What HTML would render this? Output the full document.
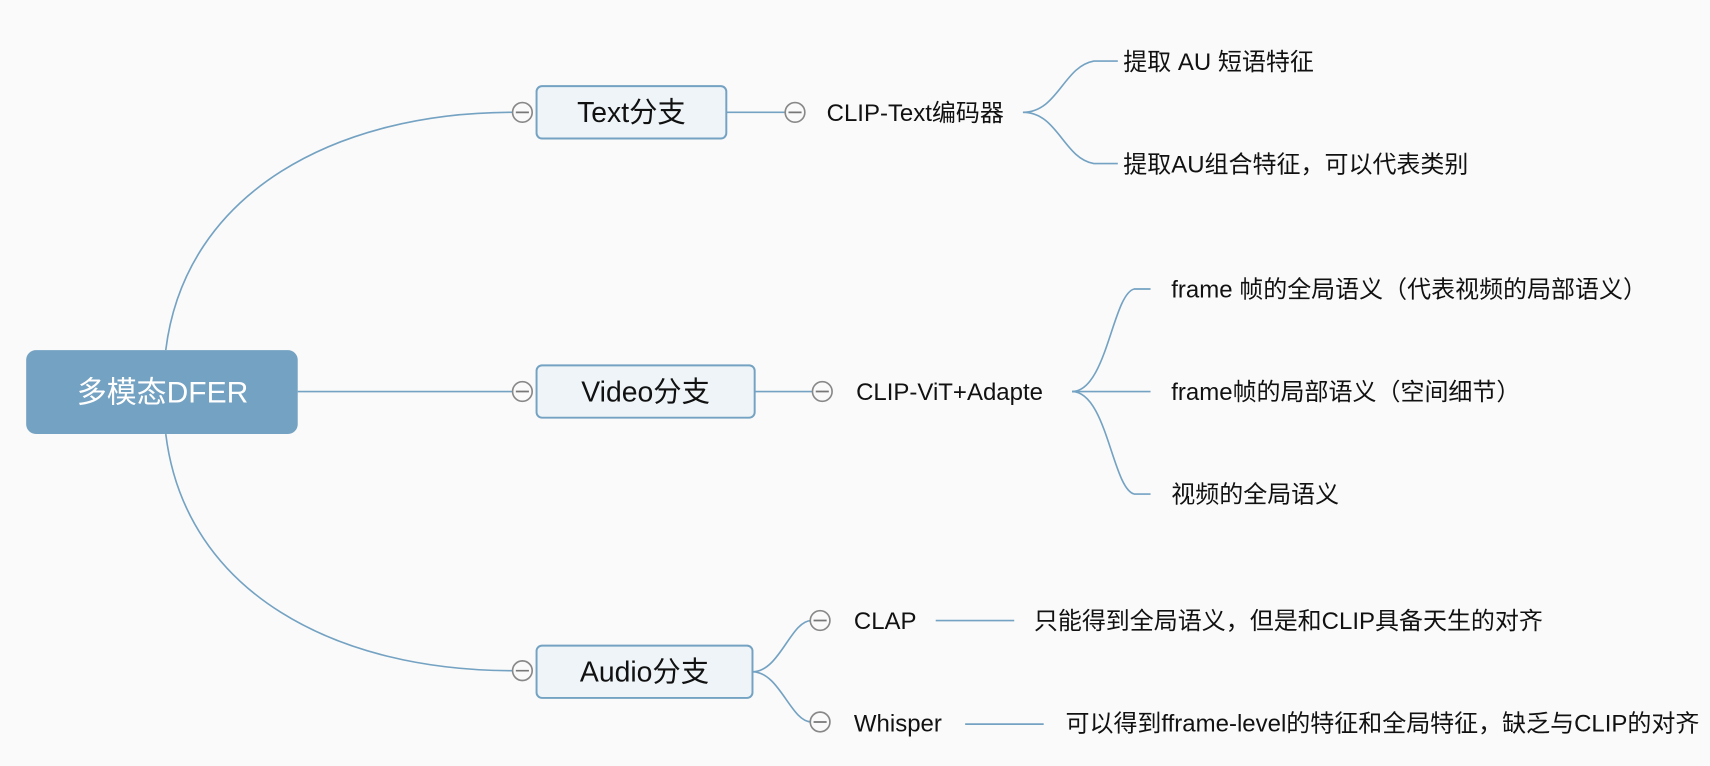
<!DOCTYPE html>
<html><head><meta charset="utf-8"><style>
html,body{margin:0;padding:0;background:#fafafa;}
svg{display:block}
text{font-family:"Liberation Sans","Noto Sans CJK SC",sans-serif;fill:#111;}
</style></head><body>
<svg width="1710" height="766" viewBox="0 0 1568 702.4" preserveAspectRatio="none" xmlns="http://www.w3.org/2000/svg">
<rect width="1568" height="702.4" fill="#fafafa"/>
<g fill="none" stroke="#74a2c2" stroke-width="1.5">
<path d="M152 321 C170 175 310 103 470 103"/>
<path d="M152 398 C170 545 310 615 470 615"/>
<path d="M273 359 L470 359"/>
<path d="M666 103 L720 103"/>
<path d="M692 359 L745 359"/>
<path d="M938 103 C970 103 975 61 1003 56 L1025 56"/>
<path d="M938 103 C970 103 975 145 1003 150 L1025 150"/>
<path d="M983 359 C1015 359 1020 270 1040 265 L1055 265"/>
<path d="M983 359 L1055 359"/>
<path d="M983 359 C1015 359 1020 448 1040 453 L1055 453"/>
<path d="M690 616 C715 616 725 569 744 569"/>
<path d="M690 616 C715 616 725 662 744 662"/>
<path d="M858 569 L930 569"/>
<path d="M885 664 L957 664"/>
</g>
<rect x="24" y="321" width="249" height="77" rx="9" fill="#74a2c2"/>
<text x="149" y="369" font-size="27.5" text-anchor="middle" style="fill:#fff">多模态DFER</text>
<g fill="#eef4f8" stroke="#74a2c2" stroke-width="1.8">
<rect x="492" y="79" width="174" height="48" rx="5"/>
<rect x="492" y="335" width="200" height="48" rx="5"/>
<rect x="492" y="592" width="198" height="48" rx="5"/>
</g>
<text x="579" y="112" font-size="26" text-anchor="middle">Text分支</text>
<text x="592" y="368" font-size="26" text-anchor="middle">Video分支</text>
<text x="591" y="625" font-size="26" text-anchor="middle">Audio分支</text>
<g fill="#fafafa" stroke="#888" stroke-width="1.5">
<circle cx="479" cy="103" r="9"/><circle cx="479" cy="359" r="9"/><circle cx="479" cy="615" r="9"/>
<circle cx="729" cy="103" r="9"/><circle cx="754" cy="359" r="9"/>
<circle cx="752" cy="569" r="9"/><circle cx="752" cy="662" r="9"/>
</g>
<g stroke="#777" stroke-width="1.6">
<path d="M473 103h12M473 359h12M473 615h12M723 103h12M748 359h12M746 569h12M746 662h12"/>
</g>
<g font-size="22">
<text x="758" y="111">CLIP-Text编码器</text>
<text x="1030" y="64">提取 AU 短语特征</text>
<text x="1030" y="158">提取AU组合特征，可以代表类别</text>
<text x="785" y="367">CLIP-ViT+Adapte</text>
<text x="1074" y="273">frame 帧的全局语义（代表视频的局部语义）</text>
<text x="1074" y="367">frame帧的局部语义（空间细节）</text>
<text x="1074" y="461">视频的全局语义</text>
<text x="783" y="577">CLAP</text>
<text x="948" y="577">只能得到全局语义，但是和CLIP具备天生的对齐</text>
<text x="783" y="671">Whisper</text>
<text x="977" y="671">可以得到fframe-level的特征和全局特征，缺乏与CLIP的对齐</text>
</g>
</svg>
</body></html>
